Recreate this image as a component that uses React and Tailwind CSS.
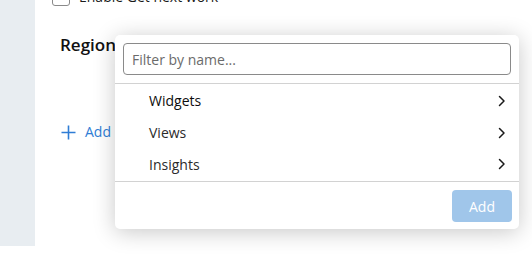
import React from 'react';

function Chevron() {
    return (
        <svg width="8" height="12" viewBox="0 0 8 12" fill="none" className="text-[#1a1a1a]">
            <path d="M1.5 1.5 L6 6 L1.5 10.5" stroke="currentColor" strokeWidth="1.5" strokeLinecap="round" strokeLinejoin="round" />
        </svg>
    );
}

function PlusIcon() {
    return (
        <svg width="15" height="15" viewBox="0 0 15 15" className="text-[#2f7dd5]">
            <path d="M7.5 0.5 V14.5 M0.5 7.5 H14.5" stroke="currentColor" strokeWidth="1.6" />
        </svg>
    );
}

const items = [
    { label: 'Widgets', active: true },
    { label: 'Views' },
    { label: 'Insights' },
];

export default function App() {
    return (
        <div className="relative flex h-[258px] w-[532px] overflow-hidden bg-white font-['Open_Sans',sans-serif]">
            {/* Sidebar strip */}
            <div className="h-[246px] w-[35px] shrink-0 bg-[#e8edf1]" />

            {/* Main content */}
            <div className="flex flex-col pl-[17px]">
                <div className="-mt-[12px] flex items-center gap-[9px]">
                    <div className="h-[18px] w-[18px] rounded-[3px] border border-[#8a8a8a] bg-white" />
                    <span className="text-[14px] leading-[18px] text-[#1a1a1a]">Enable Get next work</span>
                </div>

                <h2 className="mt-[27px] pl-[8px] text-[17px] font-semibold leading-[24px] text-[#111]">Region</h2>

                <button className="mt-[65px] ml-[9px] flex items-center gap-[9px] text-[#2f7dd5]">
                    <PlusIcon />
                    <span className="text-[14px] leading-[20px]">Add</span>
                </button>
            </div>

            {/* Popup menu */}
            <div className="absolute left-[115px] top-[35px] flex w-[404px] flex-col rounded-[5px] bg-white shadow-[0_3px_22px_rgba(0,0,0,0.22)]">
                <div className="border-b border-[#d2d2d2] px-[8px] pt-[8px] pb-[8px]">
                    <input
                        type="text"
                        placeholder="Filter by name..."
                        className="h-[32px] w-[388px] rounded-[4px] border border-[#8a8a8a] px-[8px] text-[14px] text-[#222] placeholder-[#6b6b6b] outline-none"
                    />
                </div>

                <ul className="flex flex-col py-[1px]">
                    {items.map((item) => (
                        <li key={item.label} className="flex h-[31.7px] items-center justify-between pl-[34px] pr-[13px]">
                            <span className={`text-[14px] ${item.active ? 'text-[#0d0d0d]' : 'text-[#2b2b2b]'}`}>{item.label}</span>
                            <Chevron />
                        </li>
                    ))}
                </ul>

                <div className="flex justify-end border-t border-[#d2d2d2] px-[7px] pt-[8px] pb-[7px]">
                    <button className="h-[32px] w-[60px] rounded-[4px] bg-[#a0c6ea] text-[14px] text-white">Add</button>
                </div>
            </div>
        </div>
    );
}
